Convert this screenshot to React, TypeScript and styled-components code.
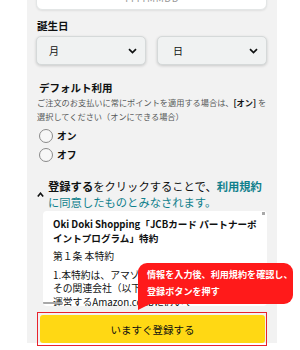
import { styled, createGlobalStyle } from "styled-components";

const GlobalStyle = createGlobalStyle`
  html, body {
    margin: 0;
    padding: 0;
    background: #ffffff;
  }
  body {
    font-family: "Noto Sans CJK JP", "Noto Sans", sans-serif;
    color: #0f1111;
    overflow: hidden;
  }
`;

const color = {
  panel: "#f2f2f2",
  text: "#0f1111",
  sub: "#565959",
  teal: "#0f7f8c",
  yellow: "#ffd814",
  red: "#ff1a1a",
  outline: "#e8232d",
};

const radios = [
  { id: "on", label: "オン" },
  { id: "off", label: "オフ" },
];

function Chevron() {
  return (
    <svg width="9" height="6" viewBox="0 0 9 6">
      <path d="M1 1.2 L4.5 4.6 L8 1.2" fill="none" stroke="#0f1111" strokeWidth="1.7" />
    </svg>
  );
}

function Caret() {
  return (
    <svg width="7" height="5" viewBox="0 0 7 5">
      <path d="M0.8 4.4 L3.5 1.2 L6.2 4.4" fill="none" stroke="#0f1111" strokeWidth="1.6" />
    </svg>
  );
}

export default function App(): JSX.Element {
  return (
    <Page>
      <GlobalStyle />
      <Panel>
        <DateInput>YYYYMMDD</DateInput>
        <Label>誕生日</Label>
        <SelectRow>
          <Select>
            <span>月</span>
            <Chevron />
          </Select>
          <Select $pad={15}>
            <span>日</span>
            <Chevron />
          </Select>
        </SelectRow>

        <Heading>デフォルト利用</Heading>
        <Description>
          ご注文のお支払いに常にポイントを適用する場合は、<b>[オン]</b> を
          <br />
          選択してください（オンにできる場合）
        </Description>
        <RadioList>
          {radios.map((r) => (
            <RadioRow key={r.id}>
              <RadioCircle />
              <RadioLabel>{r.label}</RadioLabel>
            </RadioRow>
          ))}
        </RadioList>

        <Agreement>
          <CaretBox>
            <Caret />
          </CaretBox>
          <AgreementText>
            <strong>登録する</strong>をクリックすることで、<Link>利用規約</Link>
            <br />
            <Teal>に同意したものとみなされます。</Teal>
          </AgreementText>
        </Agreement>

        <TermsBox>
          <TermsTitle>
            Oki Doki Shopping「JCBカード パートナーポ
            <br />
            イントプログラム」特約
          </TermsTitle>
          <TermsSection>第１条 本特約</TermsSection>
          <TermsBody>
            1.本特約は、アマゾンジャパン合同会社および
            <br />
            その関連会社（以下「アマゾン」といいます）が
            <br />
            運営するAmazon.co.jpにおいて
          </TermsBody>
          <ScrollThumbV />
          <ScrollThumbH />
        </TermsBox>

        <ButtonWrap>
          <SubmitButton>いますぐ登録する</SubmitButton>
          <Highlight />
        </ButtonWrap>
      </Panel>

      <Tooltip>
        情報を入力後、利用規約を確認し、
        <br />
        登録ボタンを押す
      </Tooltip>
    </Page>
  );
}

const Page = styled.div`
  position: relative;
  width: 300px;
  height: 350px;
  overflow: hidden;
  background: #ffffff;
`;

const Panel = styled.div`
  display: flex;
  flex-direction: column;
  width: 250px;
  margin-left: 27px;
  padding: 0 10px 0 9px;
  box-sizing: border-box;
  background: ${color.panel};
`;

const DateInput = styled.div`
  height: 30px;
  margin-top: -20px;
  padding-top: 11px;
  box-sizing: border-box;
  background: #ffffff;
  border: 1px solid #e3e6e6;
  border-radius: 6px;
  box-shadow: 0 1px 2px rgba(15, 17, 17, 0.08);
  font-size: 10px;
  line-height: 12px;
  color: #9a9a9a;
  text-align: center;
  letter-spacing: 0.5px;
`;

const Label = styled.div`
  margin-top: 9px;
  font-size: 10.5px;
  line-height: 14px;
  font-weight: 700;
  padding-left: 1px;
`;

const SelectRow = styled.div`
  display: grid;
  grid-template-columns: 110px 110px;
  gap: 11px;
  margin-top: 3px;
`;

const Select = styled.div<{ $pad?: number }>`
  display: flex;
  align-items: center;
  justify-content: space-between;
  height: 29px;
  box-sizing: border-box;
  padding: 0 8px 0 ${(p) => p.$pad ?? 12}px;
  background: #f0f2f2;
  border: 1px solid #d5d9d9;
  border-radius: 5px;
  box-shadow: 0 1px 3px rgba(15, 17, 17, 0.18);
  font-size: 10px;
  color: ${color.text};
`;

const Heading = styled.div`
  margin-top: 15px;
  padding-left: 3px;
  font-size: 10.5px;
  line-height: 15px;
  font-weight: 700;
`;

const Description = styled.div`
  font-size: 8.2px;
  line-height: 14px;
  color: ${color.sub};
  padding-left: 1px;
  white-space: nowrap;

  b {
    color: ${color.text};
    font-weight: 700;
  }
`;

const RadioList = styled.div`
  display: flex;
  flex-direction: column;
  margin-top: 3px;
`;

const RadioRow = styled.div`
  display: flex;
  align-items: center;
  gap: 4px;
  height: 19px;
  padding-left: 3px;
`;

const RadioCircle = styled.span`
  width: 14px;
  height: 14px;
  box-sizing: border-box;
  border: 1px solid #8a8a8a;
  border-radius: 50%;
  background: #f7f7f7;
`;

const RadioLabel = styled.span`
  font-size: 9.8px;
  font-weight: 700;
`;

const Agreement = styled.div`
  display: flex;
  align-items: center;
  margin-top: 14px;
`;

const CaretBox = styled.div`
  display: flex;
  width: 11px;
  padding-left: 1px;
  padding-top: 1px;
`;

const AgreementText = styled.div`
  font-size: 11.3px;
  line-height: 16px;
  white-space: nowrap;

  strong {
    font-weight: 700;
  }
`;

const Link = styled.span`
  color: ${color.teal};
  font-weight: 700;
`;

const Teal = styled.span`
  color: ${color.teal};
`;

const TermsBox = styled.div`
  position: relative;
  height: 95px;
  margin: 1px 0 0 7px;
  padding: 7px 10px 0;
  box-sizing: border-box;
  background: #ffffff;
  border-radius: 4px;
  overflow: hidden;
  white-space: nowrap;
`;

const TermsTitle = styled.div`
  font-size: 9.6px;
  line-height: 13.5px;
  font-weight: 700;
`;

const TermsSection = styled.div`
  margin-top: 5px;
  font-size: 9.8px;
  line-height: 13.5px;
`;

const TermsBody = styled.div`
  margin-top: 5px;
  font-size: 9.8px;
  line-height: 13.5px;
`;

const ScrollThumbV = styled.span`
  position: absolute;
  top: 1px;
  right: 2px;
  width: 3px;
  height: 3px;
  background: #a8a8a8;
`;

const ScrollThumbH = styled.span`
  position: absolute;
  left: 0;
  bottom: 2px;
  width: 20px;
  height: 2px;
  background: #a8a8a8;
`;

const ButtonWrap = styled.div`
  position: relative;
  margin: 9px 2px 0 4px;
`;

const SubmitButton = styled.div`
  display: flex;
  align-items: center;
  justify-content: center;
  height: 28px;
  background: ${color.yellow};
  border-radius: 3px;
  font-size: 10.5px;
  color: ${color.text};
`;

const Highlight = styled.span`
  position: absolute;
  top: -3px;
  left: -3px;
  right: -2px;
  bottom: -3px;
  border: 1.5px solid ${color.outline};
  pointer-events: none;
`;

const Tooltip = styled.div`
  position: absolute;
  left: 138px;
  top: 263px;
  width: 155px;
  height: 41px;
  box-sizing: border-box;
  padding: 3px 0 0 9px;
  background: ${color.red};
  border-radius: 9px 9px 9px 0;
  color: #ffffff;
  font-size: 9.1px;
  line-height: 17px;
  font-weight: 700;
  white-space: nowrap;

  &::after {
    content: "";
    position: absolute;
    left: 0;
    bottom: -6px;
    border-top: 6px solid ${color.red};
    border-right: 12px solid transparent;
  }
`;
